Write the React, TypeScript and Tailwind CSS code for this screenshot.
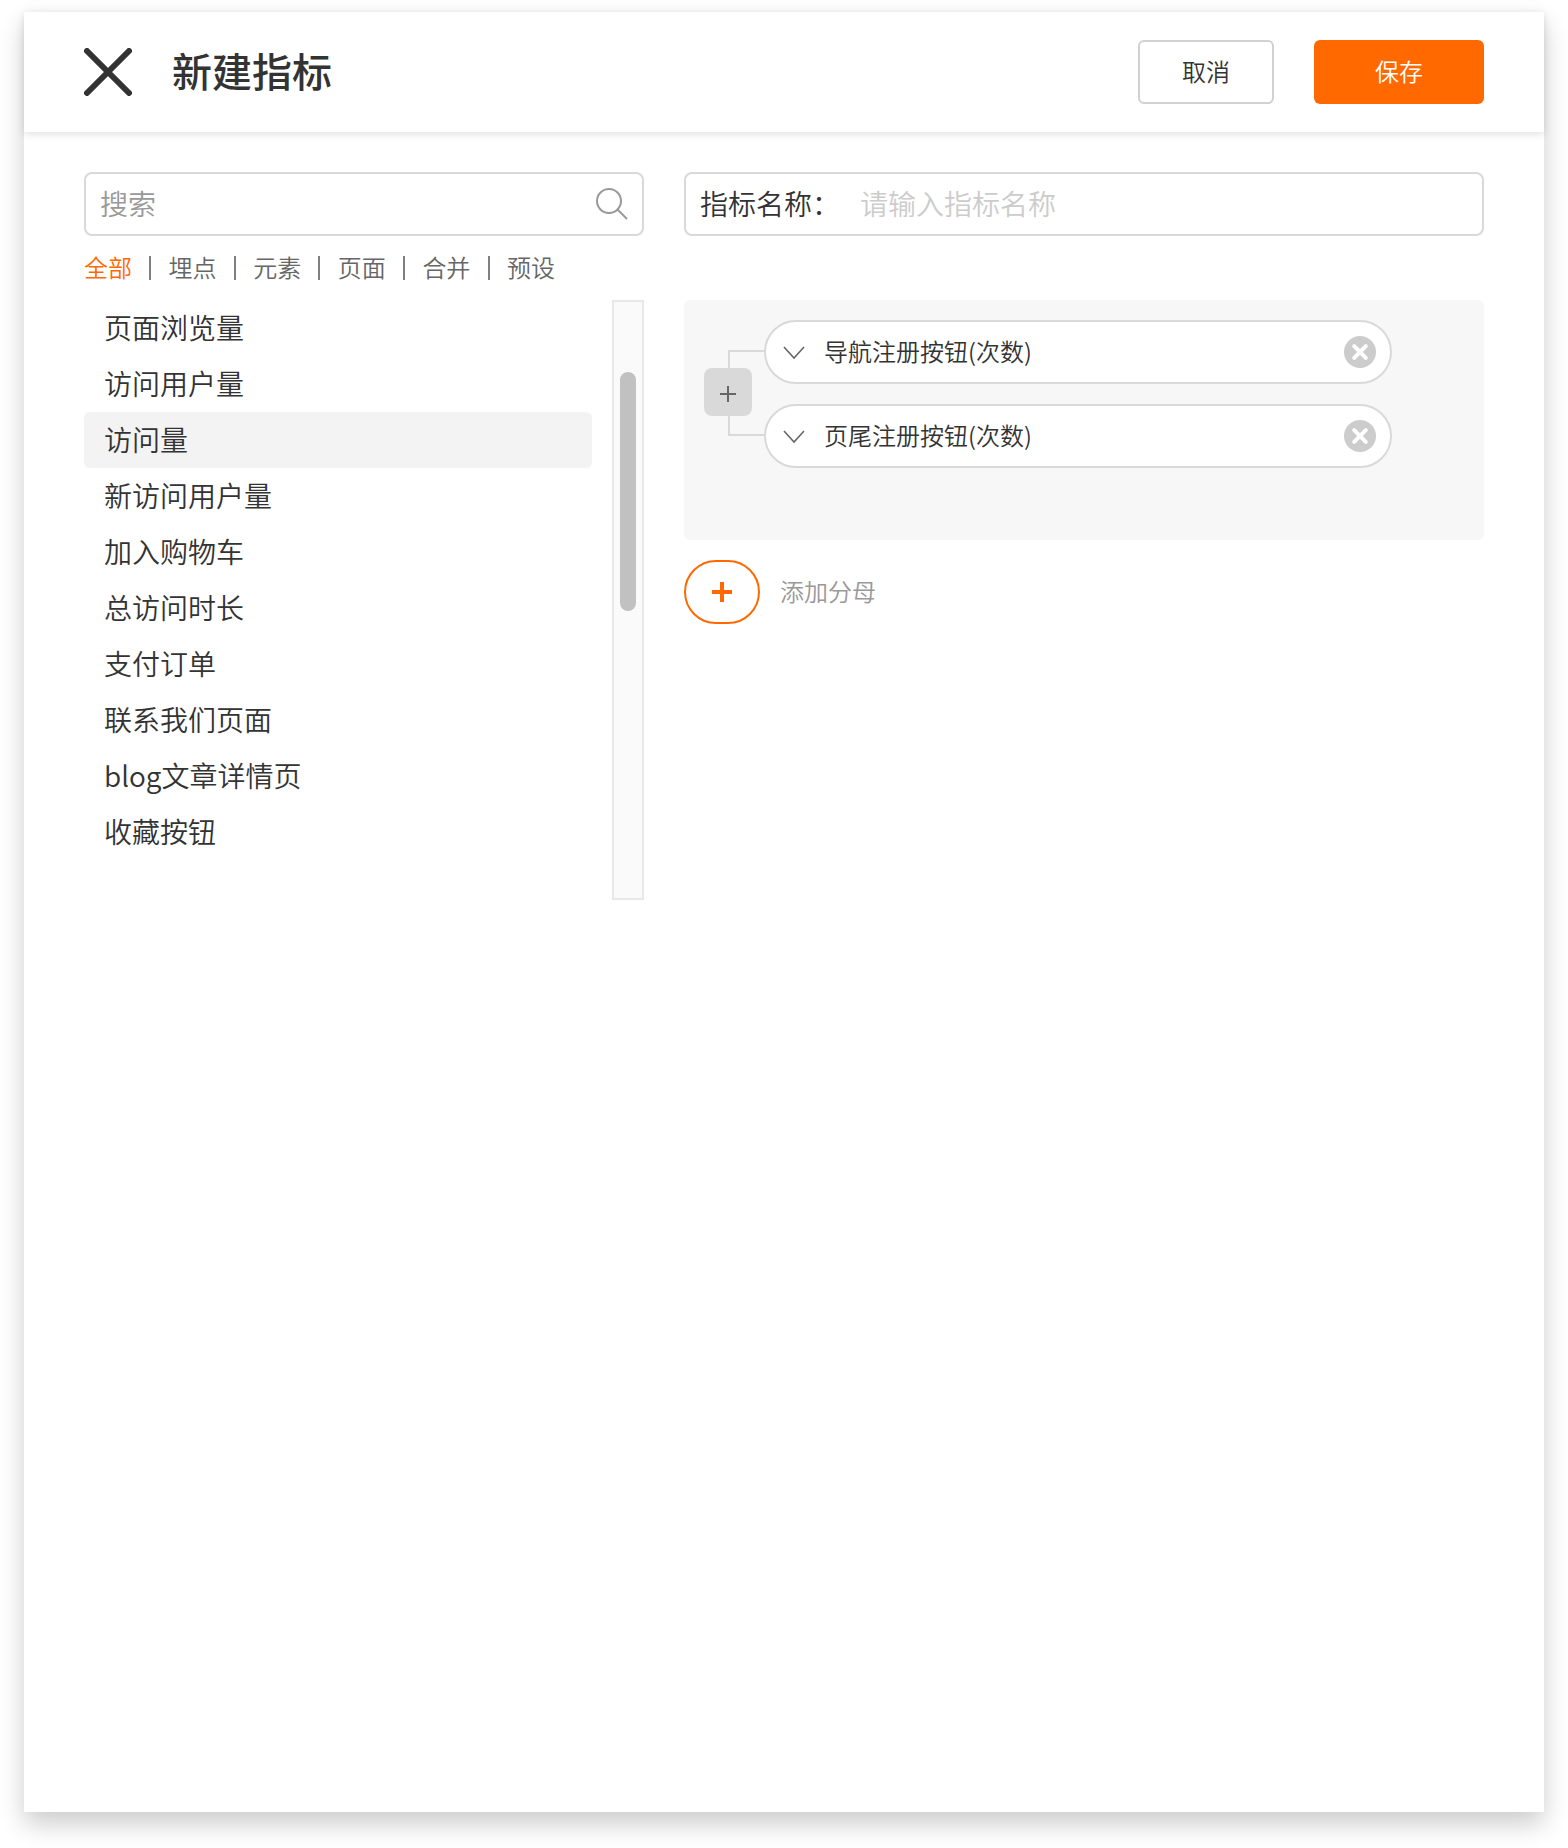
import { useState } from "react";

const FILTERS = ["全部", "埋点", "元素", "页面", "合并", "预设"];

const METRICS = [
  "页面浏览量",
  "访问用户量",
  "访问量",
  "新访问用户量",
  "加入购物车",
  "总访问时长",
  "支付订单",
  "联系我们页面",
  "blog文章详情页",
  "收藏按钮",
];

const SELECTED_EVENTS = ["导航注册按钮(次数)", "页尾注册按钮(次数)"];

function CloseIcon() {
  return (
    <svg className="size-12" viewBox="0 0 48 48" fill="none" stroke="currentColor" strokeWidth="6" strokeLinecap="round" aria-hidden="true">
      <path d="M3 3 45 45M45 3 3 45" />
    </svg>
  );
}

function SearchIcon() {
  return (
    <svg className="size-8 shrink-0 text-[#999999]" viewBox="0 0 32 32" fill="none" stroke="currentColor" strokeWidth="2" aria-hidden="true">
      <circle cx="13" cy="13" r="12" />
      <path d="M21.5 21.5 31 31" />
    </svg>
  );
}

function ChevronIcon() {
  return (
    <svg className="h-3 w-5" viewBox="0 0 20 12" fill="none" stroke="currentColor" strokeWidth="1.6" overflow="visible" aria-hidden="true">
      <path d="M0 1 10 12 20 1" />
    </svg>
  );
}

function RemoveIcon() {
  return (
    <svg className="size-8" viewBox="0 0 32 32" aria-hidden="true">
      <circle cx="16" cy="16" r="16" fill="#cccccc" />
      <path d="M10.2 10.2 21.8 21.8M21.8 10.2 10.2 21.8" stroke="#ffffff" strokeWidth="4" strokeLinecap="round" />
    </svg>
  );
}

// Sets Latin letters and brackets in the same face as the Chinese characters around them.
function MixedText({ text }: { text: string }) {
  return (
    <>
      {text.split(/([a-zA-Z()]+)/).map((part, i) =>
        i % 2 === 1 ? (
          <span key={i} className="font-['Noto_Sans_CJK_SC',sans-serif] leading-none">
            {part}
          </span>
        ) : (
          part
        ),
      )}
    </>
  );
}

function EventPill({ name }: { name: string }) {
  return (
    <div className="flex h-16 items-center rounded-full border-2 border-[#d9d9d9] bg-white pr-3.5 pl-4.5">
      <button type="button" aria-label={"展开" + name} className="text-[#666666]">
        <ChevronIcon />
      </button>
      <span className="ml-5 flex-1 text-2xl leading-8">
        <MixedText text={name} />
      </span>
      <button type="button" aria-label={"移除" + name}>
        <RemoveIcon />
      </button>
    </div>
  );
}

export default function App() {
  const [filter, setFilter] = useState(FILTERS[0]);
  const [selected, setSelected] = useState("访问量");

  return (
    <div className="flex min-h-screen flex-col bg-white px-6 pt-3 pb-9 font-['Lato','Noto_Sans_CJK_SC',sans-serif] font-[350] text-[#333333]">
      <div className="flex-1 bg-white shadow-[0_12px_24px_rgba(0,0,0,0.2)]">
        <header className="flex h-30 items-center bg-white px-15 shadow-[0_2px_8px_rgba(0,0,0,0.12)]">
          <button type="button" aria-label="关闭">
            <CloseIcon />
          </button>
          <h1 className="ml-10 flex-1 text-[40px] leading-14 font-medium">新建指标</h1>
          <button type="button" className="h-16 w-34 rounded-md border-2 border-[#d1d1d1] text-2xl">
            取消
          </button>
          <button type="button" className="ml-10 h-16 w-[170px] rounded-md bg-[#ff6900] text-2xl text-white">
            保存
          </button>
        </header>

        <main className="grid grid-cols-[7fr_10fr] gap-10 px-15 py-10">
          <section>
            <div className="flex h-16 items-center rounded-lg border-2 border-[#d9d9d9] pr-3.5 pl-3.5">
              <input
                type="text"
                aria-label="搜索"
                placeholder="搜索"
                className="min-w-0 flex-1 text-[28px] leading-10 outline-none placeholder:text-[#999999]"
              />
              <SearchIcon />
            </div>

            <div className="flex h-16 w-[471px] items-center justify-between text-2xl text-[#666666]">
              {FILTERS.map((item, i) => (
                <div key={item} className="contents">
                  {i > 0 && <span className="h-6 w-0.5 bg-[#808080]" />}
                  <button
                    type="button"
                    aria-pressed={filter === item}
                    onClick={() => setFilter(item)}
                    className={filter === item ? "text-[#ff6900]" : ""}
                  >
                    {item}
                  </button>
                </div>
              ))}
            </div>

            <div className="flex gap-5">
              <ul className="flex-1">
                {METRICS.map((item) => (
                  <li key={item}>
                    <button
                      type="button"
                      onClick={() => setSelected(item)}
                      className={
                        selected === item
                          ? "h-14 w-full rounded-md bg-[#f3f3f3] px-5 text-left text-[28px] leading-10"
                          : "h-14 w-full rounded-md px-5 text-left text-[28px] leading-10"
                      }
                    >
                      <MixedText text={item} />
                    </button>
                  </li>
                ))}
              </ul>
              <div className="h-[600px] w-8 border-2 border-[#e8e8e8] bg-[#fafafa] px-1.5 pt-[70px]">
                <div className="h-[239px] rounded-full bg-[#c1c1c1]" />
              </div>
            </div>
          </section>

          <section>
            <div className="flex h-16 items-center rounded-lg border-2 border-[#d9d9d9] px-3.5 text-[28px] leading-10">
              <label htmlFor="metric-name">指标名称：</label>
              <input
                id="metric-name"
                type="text"
                placeholder="请输入指标名称"
                className="ml-5 min-w-0 flex-1 outline-none placeholder:text-[#cccccc]"
              />
            </div>

            <div className="mt-16 flex min-h-60 items-start rounded-md bg-[#f7f7f7] py-5 pr-23 pl-5">
              <div className="flex w-15 flex-col pt-7.5">
                <div className="ml-6 h-4.5 border-t-2 border-l-2 border-[#d9d9d9]" />
                <button type="button" aria-label="添加事件" className="flex size-12 items-center justify-center rounded-lg bg-[#d9d9d9] text-[#666666]">
                  <svg className="size-5" viewBox="0 0 20 20" stroke="currentColor" strokeWidth="2" aria-hidden="true">
                    <path d="M10 4V20M2 12H18" />
                  </svg>
                </button>
                <div className="ml-6 h-5 border-b-2 border-l-2 border-[#d9d9d9]" />
              </div>
              <div className="flex flex-1 flex-col gap-5">
                {SELECTED_EVENTS.map((name) => (
                  <EventPill key={name} name={name} />
                ))}
              </div>
            </div>

            <div className="mt-5 flex items-center gap-5 text-2xl">
              <button
                type="button"
                id="add-denominator"
                aria-labelledby="add-denominator-label"
                className="flex h-16 w-19 items-center justify-center rounded-full border-2 border-[#ff6900] text-[#ff6900]"
              >
                <svg className="size-5" viewBox="0 0 20 20" stroke="currentColor" strokeWidth="4" aria-hidden="true">
                  <path d="M10 0V20M0 10H20" />
                </svg>
              </button>
              <label id="add-denominator-label" htmlFor="add-denominator" className="text-[#999999]">
                添加分母
              </label>
            </div>
          </section>
        </main>
      </div>
    </div>
  );
}
